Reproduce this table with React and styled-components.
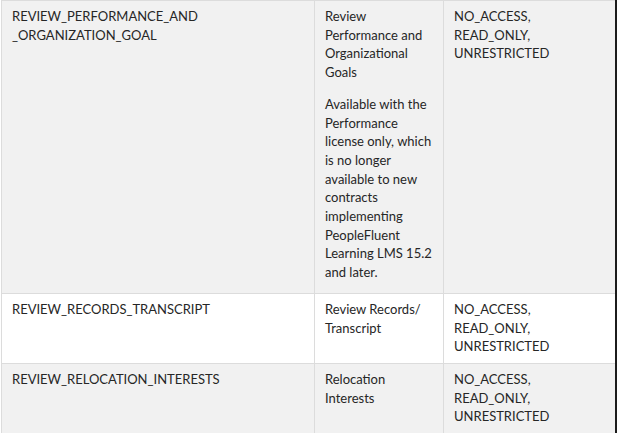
import styled, { createGlobalStyle } from 'styled-components';

const GlobalStyle = createGlobalStyle`
  html, body {
    margin: 0;
    padding: 0;
    background: #ffffff;
  }
  body {
    font-family: Lato, "Open Sans", sans-serif;
    color: #262626;
  }
`;

const Page = styled.div`
  width: 617px;
  height: 433px;
  overflow: hidden;
  box-sizing: border-box;
  border-right: 2px solid #1c1c1c;
  padding-left: 1px;
`;

const Table = styled.table`
  border-collapse: collapse;
  table-layout: fixed;
  width: 630px;
  font-size: 13px;
  line-height: 18.7px;
`;

const Row = styled.tr`
  background: ${(p) => (p.$shaded ? '#f1f1f1' : '#ffffff')};
`;

const Cell = styled.td`
  border: 1px solid #dcdcdc;
  padding: 6px 10px 7px 10px;
  vertical-align: top;
  width: ${(p) => p.$width}px;
`;

const Para = styled.p`
  margin: 0 0 13px;

  &:last-child {
    margin-bottom: 4px;
  }
`;

const rows = [
  {
    name: ['REVIEW_PERFORMANCE_AND', '_ORGANIZATION_GOAL'],
    desc: [
      'Review Performance and Organizational Goals',
      'Available with the Performance license only, which is no longer available to new contracts implementing PeopleFluent Learning LMS 15.2 and later.',
    ],
  },
  {
    name: ['REVIEW_RECORDS_TRANSCRIPT'],
    desc: ['Review Records/ Transcript'],
  },
  {
    name: ['REVIEW_RELOCATION_INTERESTS'],
    desc: ['Relocation Interests'],
  },
];

const App = () => {
  return (
    <Page>
      <GlobalStyle />
      <Table>
        <tbody>
          {rows.map((row, i) => (
            <Row key={i} $shaded={i % 2 === 0}>
              <Cell $width={292}>
                {row.name.map((part, j) => (
                  <span key={j}>
                    {part}
                    {j < row.name.length - 1 && <br />}
                  </span>
                ))}
              </Cell>
              <Cell $width={108}>
                {row.desc.length > 1
                  ? row.desc.map((d, j) => <Para key={j}>{d}</Para>)
                  : row.desc[0]}
              </Cell>
              <Cell>
                NO_ACCESS,
                <br />
                READ_ONLY,
                <br />
                UNRESTRICTED
              </Cell>
            </Row>
          ))}
        </tbody>
      </Table>
    </Page>
  );
};

export default App;
